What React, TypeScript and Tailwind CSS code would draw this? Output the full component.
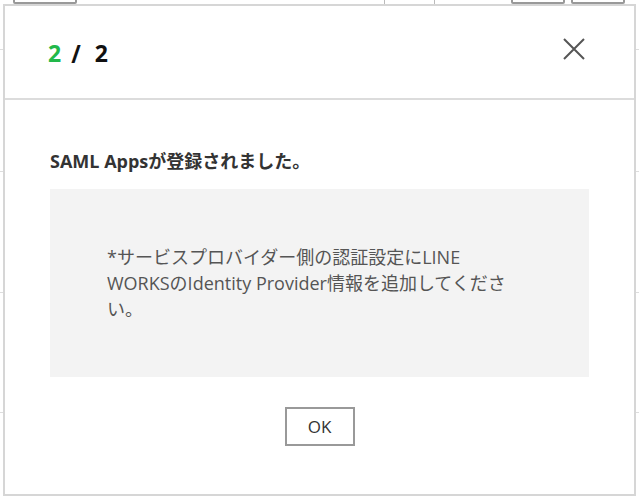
import React from 'react';

const font = { fontFamily: '"Open Sans", "Noto Sans CJK JP", sans-serif' };

function Backdrop() {
  // the settings table that lies behind the modal
  return (
    <div className="flex flex-col w-full h-full">
      <div className="flex items-end h-[4px] overflow-hidden pl-[13px]">
        <div className="w-[64px] h-[8px] shrink-0 border-2 border-[#999] rounded-[2px]" />
        <div className="flex-1 flex h-full pl-[307px]">
          <div className="w-[51px] h-full border-x border-[#bbb]" />
          <div className="ml-[76px] w-[54px] h-[8px] -mt-[4px] border-2 border-[#999] rounded-[2px]" />
          <div className="ml-[6px] w-[54px] h-[8px] -mt-[4px] border-2 border-[#999] rounded-[2px]" />
        </div>
      </div>
      <div className="h-[46px] border-b border-[#ddd]" />
      <div className="h-[122px] border-b border-[#ddd]" />
      <div className="h-[121px] border-b border-[#ddd]" />
      <div className="h-[120px] border-b border-[#ddd]" />
    </div>
  );
}

export default function App() {
  return (
    <div className="relative w-[639px] h-[498px] bg-white overflow-hidden" style={font}>
      <Backdrop />
      <div className="absolute left-[3px] top-[4px] w-[633px] h-[492px] bg-white border-2 border-[#d6d6d6] flex flex-col">
        <div className="h-[94px] shrink-0 border-b-2 border-[#dcdcdc] flex items-center justify-between pl-[43px] pr-[48px]">
          <div className="flex text-[23px] font-bold pt-[2px]">
            <span className="text-[#22b84a]">2</span>
            <span className="text-[#111] ml-[10px] mr-[14px] scale-y-110">/</span>
            <span className="text-[#111]">2</span>
          </div>
          <svg width="24" height="24" viewBox="0 0 24 24" className="mt-[-6px]">
            <path d="M2 2 L22 22 M22 2 L2 22" stroke="#555" strokeWidth="2" fill="none" />
          </svg>
        </div>
        <div className="flex flex-col px-[45px] pt-[48px]">
          <div className="text-[18px] font-bold text-[#333] leading-[26px]">SAML Appsが登録されました。</div>
          <div className="mt-[15px] h-[188px] bg-[#f3f3f3] pl-[57px] pt-[55px]">
            <p className="w-[404px] text-[18px] leading-[26px] text-[#555]">
              *サービスプロバイダー側の認証設定にLINE WORKSのIdentity Provider情報を追加してください。
            </p>
          </div>
          <div className="flex justify-center mt-[30px]">
            <button className="w-[70px] h-[39px] border-2 border-[#999] bg-white text-[17px] text-[#333]">OK</button>
          </div>
        </div>
      </div>
    </div>
  );
}
